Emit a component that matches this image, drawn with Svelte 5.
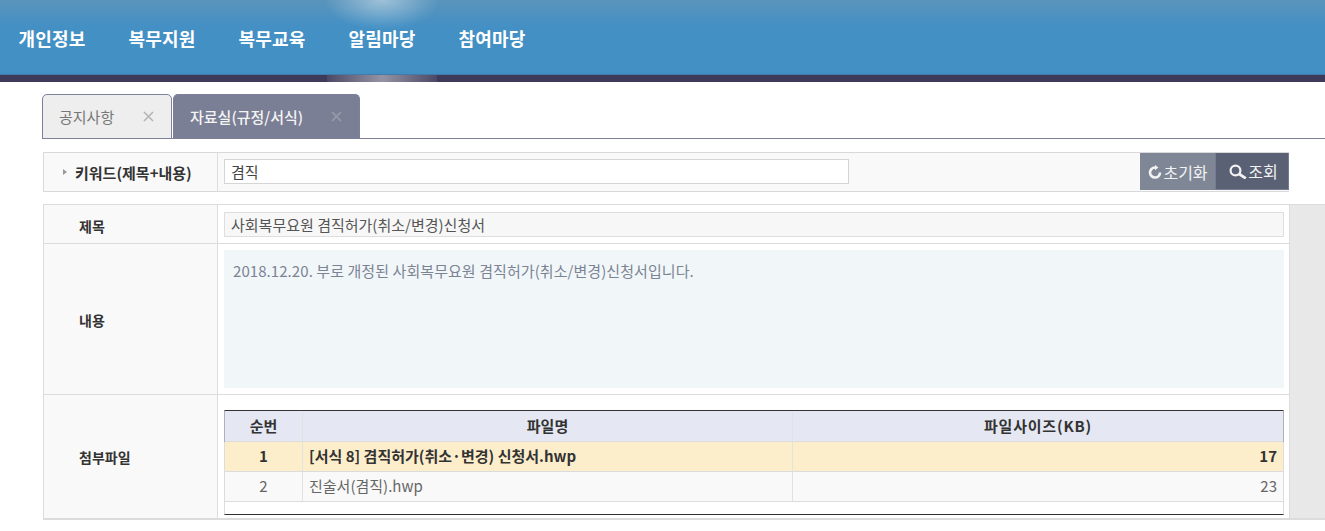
<script lang="ts">
const menus = ['개인정보', '복무지원', '복무교육', '알림마당', '참여마당'];
const tabs = [
  { name: '공지사항', active: false },
  { name: '자료실(규정/서식)', active: true }
];
const files = [
  { no: 1, name: '[서식 8] 겸직허가(취소·변경) 신청서.hwp', size: 17, selected: true },
  { no: 2, name: '진술서(겸직).hwp', size: 23, selected: false }
];
</script>

<header class="top">
  <nav class="menu">
    {#each menus as menu, i}
      <div class="menu-item" class:on={i === 3}>{menu}</div>
    {/each}
  </nav>
</header>

<main class="page">
  <div class="tabs">
    {#each tabs as tab}
      <div class="tab" class:active={tab.active}>
        <span>{tab.name}</span>
        <svg class="close" width="11" height="11" viewBox="0 0 11 11"><path d="M1 1l9 9M10 1l-9 9" stroke="currentColor" stroke-width="1.6" fill="none"/></svg>
      </div>
    {/each}
  </div>

  <div class="search">
    <div class="search-label"><i class="arrow"></i>키워드(제목+내용)</div>
    <div class="search-field"><input type="text" value="겸직" /></div>
    <div class="buttons">
      <button class="btn reset">
        <svg width="14" height="14" viewBox="0 0 14 14"><path d="M12 7.5A5 5 0 1 1 7 2.5" stroke="#f2f2f2" stroke-width="2.6" fill="none"/><path d="M7 0v5.2L10.4 2.6z" fill="#f2f2f2"/></svg>초기화
      </button>
      <button class="btn find">
        <svg width="18" height="15" viewBox="0 0 18 15"><circle cx="6.5" cy="6.5" r="4.9" stroke="#f2f2f2" stroke-width="2.2" fill="none"/><path d="M10.2 10l6.6 4.4" stroke="#f2f2f2" stroke-width="2.8"/></svg>조회
      </button>
    </div>
  </div>

  <div class="detail-wrap">
    <div class="detail">
      <div class="row title-row">
        <div class="label">제목</div>
        <div class="value"><div class="title-box">사회복무요원 겸직허가(취소/변경)신청서</div></div>
      </div>
      <div class="row content-row">
        <div class="label">내용</div>
        <div class="value"><div class="content-box">2018.12.20. 부로 개정된 사회복무요원 겸직허가(취소/변경)신청서입니다.</div></div>
      </div>
      <div class="row file-row">
        <div class="label">첨부파일</div>
        <div class="value">
          <div class="grid">
            <div class="grid-row head">
              <div>순번</div>
              <div>파일명</div>
              <div class="size-head">파일사이즈(KB)</div>
            </div>
            {#each files as file}
              <div class="grid-row" class:selected={file.selected}>
                <div>{file.no}</div>
                <div class="name">{file.name}</div>
                <div class="size">{file.size}</div>
              </div>
            {/each}
            <div class="grid-empty"></div>
          </div>
        </div>
      </div>
    </div>
    <div class="side"></div>
  </div>
</main>

<style>
:global(body) {
  margin: 0;
  background: #fff;
  overflow: hidden;
  font-family: "Noto Sans CJK KR", "Noto Sans", sans-serif;
}
.top {
  height: 75px;
  border-bottom: 7px solid #3d3b59;
  background: linear-gradient(#5a94bb 0, #4490c4 26px, #4190c4 74px, #3f7cac 74px);
}
.menu {
  display: flex;
  margin-left: -3px;
  height: 75px;
}
.menu-item {
  width: 110px;
  margin-bottom: -7px;
  padding-top: 25px;
  box-sizing: border-box;
  text-align: center;
  color: #fff;
  font-size: 18px;
  line-height: 27px;
  font-weight: 700;
  letter-spacing: 0.2px;
}
.menu-item.on {
  background:
    radial-gradient(ellipse 58px 30px at 50% 0, rgba(255,255,255,.42), rgba(255,255,255,.05) 85%, rgba(255,255,255,0) 100%),
    linear-gradient(90deg, rgba(255,255,255,.07), rgba(255,255,255,.45) 50%, rgba(255,255,255,.07)) bottom / 100% 7px no-repeat;
}
.page {
  padding-top: 12px;
}
.tabs {
  display: flex;
  gap: 1px;
  height: 44px;
  margin-left: 42px;
  border-bottom: 1px solid #7c8199;
}
.tab {
  display: flex;
  align-items: center;
  justify-content: space-between;
  height: 45px;
  box-sizing: border-box;
  padding: 0 11px 0 16px;
  width: 130px;
  border: 1px solid #7c8199;
  border-radius: 5px 5px 0 0;
  background: #eeeeee;
  color: #777;
  font-size: 15px;
}
.tab .close {
  color: #b4b4b4;
  margin-right: 6px;
}
.tab.active {
  width: 187px;
  background: #7a7f95;
  color: #f4f4f4;
  font-weight: 500;
  border-bottom-color: #7a7f95;
}
.tab.active .close {
  color: #9a9da9;
}
.search {
  display: flex;
  align-items: center;
  height: 40px;
  box-sizing: border-box;
  margin: 13px 36px 0 43px;
  border: 1px solid #d9d9d9;
  border-right: 0;
  background: #f9f9f9;
}
.search-label {
  display: flex;
  align-items: center;
  width: 174px;
  height: 100%;
  box-sizing: border-box;
  padding-left: 19px;
  border-right: 1px solid #dcdcdc;
  color: #333;
  font-size: 15px;
  font-weight: 700;
}
.arrow {
  width: 0;
  height: 0;
  margin-right: 8px;
  border-left: 4px solid #999;
  border-top: 3.5px solid transparent;
  border-bottom: 3.5px solid transparent;
}
.search-field {
  flex: 1;
  padding-left: 6px;
}
.search-field input {
  display: block;
  width: 625px;
  height: 25px;
  margin-top: -1px;
  box-sizing: border-box;
  padding: 0 6px;
  border: 1px solid #d5d5d5;
  background: #fff;
  color: #444;
  font: 15px "Noto Sans CJK KR", sans-serif;
  outline: none;
}
.buttons {
  display: flex;
  align-self: stretch;
}
.btn {
  display: flex;
  align-items: center;
  justify-content: center;
  height: 37px;
  padding: 0;
  border: 0;
  color: #f2f2f2;
  font: 16px "Noto Sans CJK KR", sans-serif;
}
.btn.reset {
  width: 75px;
  background: #7f8797;
  gap: 1px;
  padding-left: 1px;
}
.btn.find {
  width: 74px;
  background: #5a6175;
  border: 1px solid #757c92;
  border-width: 0 1px 1px;
  gap: 1px;
  padding-left: 3px;
}
.detail-wrap {
  display: flex;
  margin: 12px 0 0 43px;
  border-bottom: 2px solid #dcdcdc;
}
.detail {
  width: 1246px;
  box-sizing: border-box;
  border: 1px solid #dcdcdc;
  border-bottom: 0;
  border-right: 0;
}
.side {
  flex: 1;
  background: #e8e8e8;
  border-top: 1px solid #dcdcdc;
  border-left: 1px solid #dcdcdc;
}
.row {
  display: flex;
  border-bottom: 1px solid #dcdcdc;
}
.row:last-child {
  border-bottom: 0;
}
.title-row { height: 38px; }
.content-row { height: 150px; }
.file-row { height: 123px; }
.label {
  display: flex;
  align-items: center;
  width: 174px;
  box-sizing: border-box;
  padding-left: 35px;
  border-right: 1px solid #dcdcdc;
  background: #f9f9f9;
  color: #333;
  font-size: 14px;
  font-weight: 700;
}
.value {
  flex: 1;
  padding: 0 5px 0 6px;
}
.title-row .label { padding-top: 4px; }
.content-row .label { padding-top: 2px; }
.title-box {
  height: 25px;
  margin-top: 7px;
  box-sizing: border-box;
  padding-left: 6px;
  border: 1px solid #dedede;
  background: #f7f7f7;
  color: #555;
  font-size: 15px;
  line-height: 23px;
}
.content-box {
  height: 138px;
  margin-top: 6px;
  box-sizing: border-box;
  padding: 9px 9px;
  background: #f1f6f9;
  color: #7c8494;
  font-size: 15px;
  line-height: 24px;
  letter-spacing: 0.07px;
}
.grid {
  margin-top: 15px;
  border-top: 1px solid #333;
  border-bottom: 1px solid #333;
  border-left: 1px solid #dcdcdc;
  border-right: 1px solid #dcdcdc;
  font-size: 15px;
}
.grid-row {
  display: grid;
  grid-template-columns: 77px 490px 1fr;
  height: 30px;
  box-sizing: border-box;
  border-bottom: 1px solid #dcdcdc;
  background: #f9f9f9;
  color: #666;
  line-height: 28px;
  text-align: center;
}
.grid-row > div + div {
  border-left: 1px solid #e2e2e2;
}
.grid-row.head {
  height: 31px;
  box-shadow: -1px 0 #aeb2bd, 1px 0 #aeb2bd;
  background: #e5e8f2;
  color: #333;
  font-weight: 700;
  line-height: 29px;
}
.grid-row.selected {
  background: #fdeecb;
  color: #333;
  font-weight: 700;
}
.size-head {
  letter-spacing: 0.8px;
}
.name {
  padding-left: 6px;
  text-align: left;
}
.size {
  padding-right: 6px;
  text-align: right;
}
.grid-empty {
  height: 12px;
  background: #fff;
}
</style>
